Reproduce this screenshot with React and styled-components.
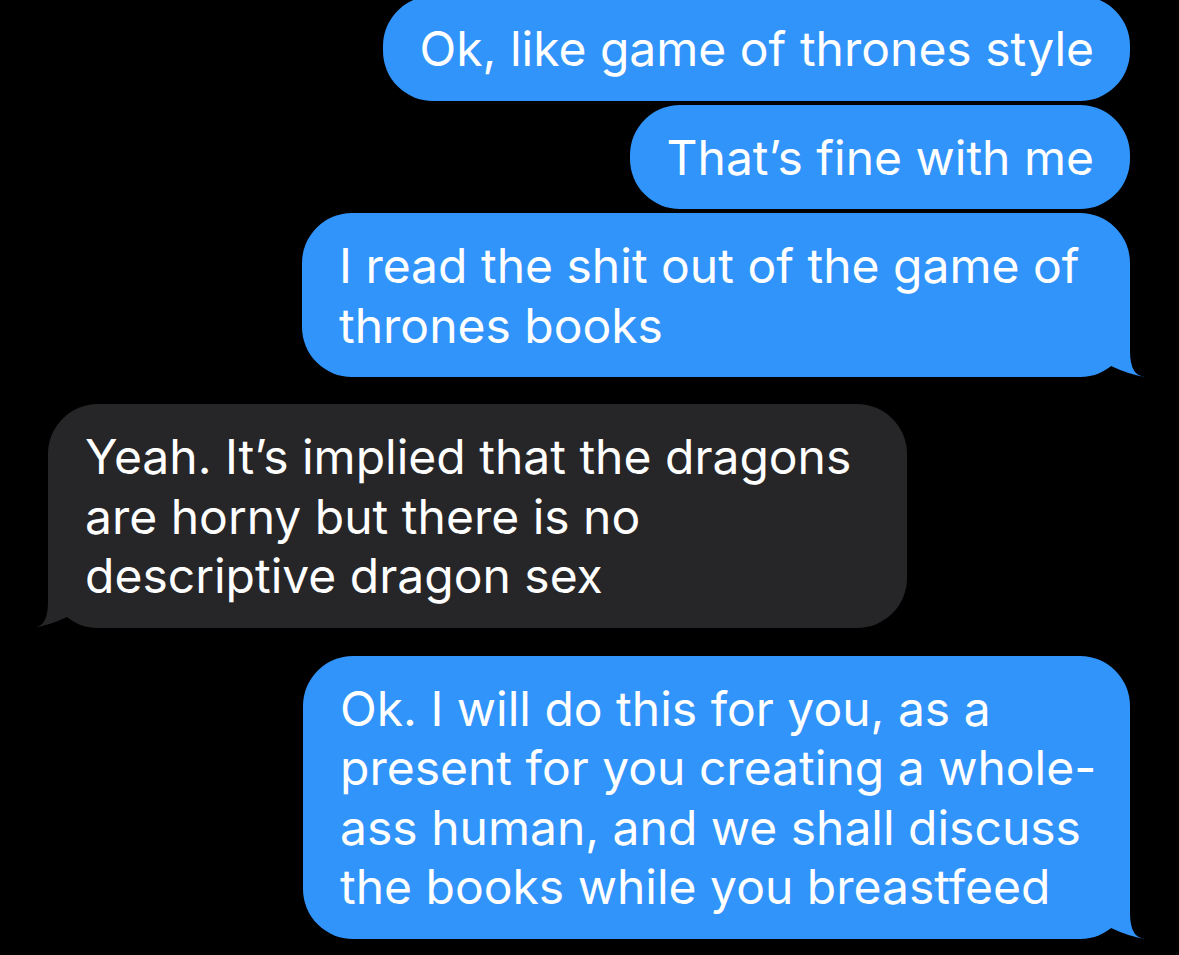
import React from 'react'
import styled, { createGlobalStyle } from 'styled-components'

const GlobalStyle = createGlobalStyle`
  html, body {
    margin: 0;
    padding: 0;
    background: #000;
  }
  body {
    font-family: Inter, 'Liberation Sans', Arial, sans-serif;
    -webkit-font-smoothing: antialiased;
  }
`

// max = fixed bubble width for the messages that wrap
const messages = [
  { id: 1, me: true, text: 'Ok, like game of thrones style', gap: 0 },
  { id: 2, me: true, text: 'That’s fine with me', gap: 4 },
  { id: 3, me: true, text: 'I read the shit out of the game of thrones books', gap: 4, tail: true, max: 828 },
  {
    id: 4,
    me: false,
    text: 'Yeah. It’s implied that the dragons are horny but there is no descriptive dragon sex',
    gap: 27,
    tail: true,
    max: 859
  },
  {
    id: 5,
    me: true,
    text: 'Ok. I will do this for you, as a present for you creating a whole-ass human, and we shall discuss the books while you breastfeed',
    gap: 28,
    tail: true,
    max: 827
  }
]

const Tail = ({ color, me }) => (
  <TailSvg $me={me} width="72" height="52" viewBox="0 0 72 52">
    <path d="M12 1 L55 1 L55 26 Q55 52 71 52 Q55 50 36 41 Z" fill={color} />
  </TailSvg>
)

export default function App() {
  return (
    <>
      <GlobalStyle />
      <Thread>
        {messages.map(m => (
          <Row key={m.id} $me={m.me} $gap={m.gap}>
            <Bubble $me={m.me} $max={m.max}>
              {m.text}
              {m.tail && <Tail me={m.me} color={m.me ? '#3194fb' : '#262628'} />}
            </Bubble>
          </Row>
        ))}
      </Thread>
    </>
  )
}

const Thread = styled.div`
  display: flex;
  flex-direction: column;
  margin-top: -4px;
  padding: 0 49px 0 48px;
  width: 1179px;
  box-sizing: border-box;
`

const Row = styled.div`
  display: flex;
  justify-content: ${p => (p.$me ? 'flex-end' : 'flex-start')};
  margin-top: ${p => p.$gap}px;
`

const Bubble = styled.div`
  position: relative;
  isolation: isolate;
  box-sizing: border-box;
  ${p => (p.$max ? `width: ${p.$max}px;` : '')}
  padding: 23px ${p => (p.$max ? 16 : 36)}px 22px 37px;
  border-radius: 50px;
  background: ${p => (p.$me ? '#3194fb' : '#262628')};
  color: #fff;
  font-size: 48px;
  line-height: 59.5px;
  letter-spacing: 0;
`

const TailSvg = styled.svg`
  position: absolute;
  z-index: -1;
  bottom: 0;
  ${p => (p.$me ? 'right: -17px;' : 'left: -17px; transform: scaleX(-1);')}
  display: block;
`
